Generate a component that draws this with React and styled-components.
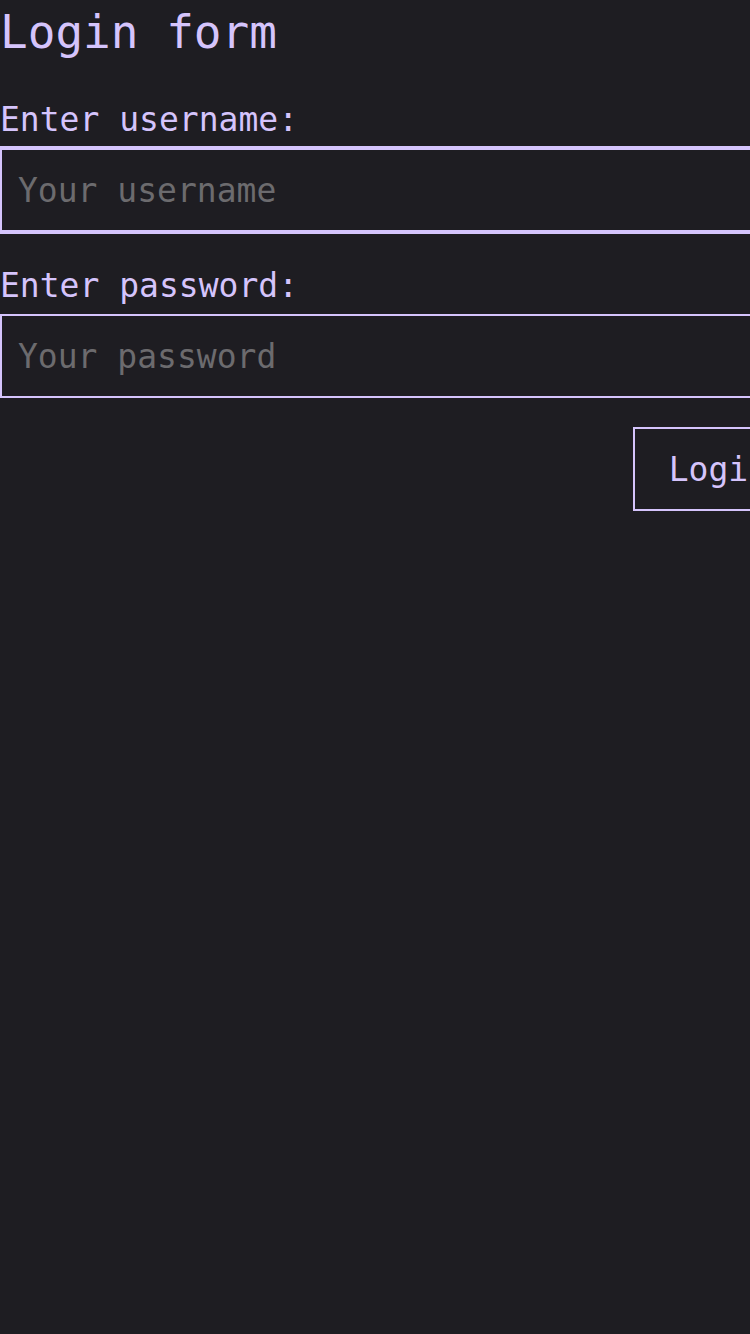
import React from 'react';
import styled, { createGlobalStyle } from 'styled-components';

const GlobalStyle = createGlobalStyle`
  html, body {
    margin: 0;
    padding: 0;
    background-color: #1e1d22;
    overflow: hidden;
  }
  body {
    min-height: 1334px;
    font-family: "DejaVu Sans Mono", "Liberation Mono", monospace;
    color: #d5c4fc;
  }
`;

const LoginForm = styled.form`
  width: 804px;
  display: flex;
  flex-direction: column;
`;

const FormTitle = styled.h1`
  margin: 0 0 2px;
  font-size: 46px;
  font-weight: normal;
  line-height: 64px;
  color: #d5c4fc;
`;

const Label = styled.label`
  display: block;
  margin: 34px 0 8px;
  font-size: 33px;
  line-height: 40px;
  color: #d5c4fc;
`;

const Input = styled.input`
  box-sizing: border-box;
  width: 100%;
  height: 84px;
  padding: 0 16px;
  border: 2px solid #d5c4fc;
  background-color: #1e1d22;
  color: #d5c4fc;
  font-family: inherit;
  font-size: 33px;
  outline: none;
  box-shadow: ${(p) => (p.$active ? '0 0 0 2px #d5c4fc' : 'none')};

  &::placeholder {
    color: #6c6b6e;
  }
`;

const LoginButton = styled.button`
  align-self: flex-end;
  margin-top: 29px;
  height: 84px;
  padding: 0 34px;
  border: 2px solid #d5c4fc;
  background-color: #1e1d22;
  color: #d5c4fc;
  font-family: inherit;
  font-size: 33px;
  cursor: pointer;
`;

const App = () => {
  return (
    <>
      <GlobalStyle />
      <LoginForm onSubmit={(e) => e.preventDefault()}>
        <FormTitle>Login form</FormTitle>
        <Label htmlFor="username">Enter username:</Label>
        <Input id="username" type="text" placeholder="Your username" $active />
        <Label htmlFor="password">Enter password:</Label>
        <Input id="password" type="password" placeholder="Your password" />
        <LoginButton type="submit">Login</LoginButton>
      </LoginForm>
    </>
  );
};

export default App;
